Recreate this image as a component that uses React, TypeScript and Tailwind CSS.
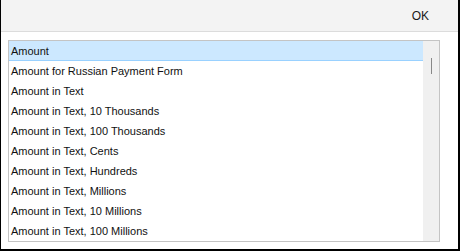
const items = [
  'Amount',
  'Amount for Russian Payment Form',
  'Amount in Text',
  'Amount in Text, 10 Thousands',
  'Amount in Text, 100 Thousands',
  'Amount in Text, Cents',
  'Amount in Text, Hundreds',
  'Amount in Text, Millions',
  'Amount in Text, 10 Millions',
  'Amount in Text, 100 Millions',
];

export default function App() {
  return (
    <div
      className="w-[460px] h-[251px] bg-white border-l border-r-2 border-b-2 border-black flex flex-col overflow-hidden text-[#111]"
      style={{ fontFamily: 'Tahoma, "Liberation Sans", Arial, sans-serif' }}
    >
      {/* toolbar */}
      <div className="h-[32px] shrink-0 bg-[#f3f3f3] border-b border-[#dcdcdc] flex items-center justify-end pr-[29px]">
        <button className="text-[12px] text-[#1a1a1a] leading-none">OK</button>
      </div>

      {/* list */}
      <div className="flex-1 pl-[7px] pr-[18px] pt-[8px] pb-[7px]">
        <div className="h-full border border-[#c4c4c4] flex overflow-hidden">
          <ul className="flex-1">
            {items.map((item, i) => (
              <li
                key={item}
                className={
                  i === 0
                    ? 'h-[20px] pl-[2px] pt-[1px] flex items-center text-[11px] bg-[#cce8ff] border-b border-[#99d1ff]'
                    : 'h-[20px] pl-[2px] pt-[1px] flex items-center text-[11px]'
                }
              >
                {item}
              </li>
            ))}
          </ul>
          <div className="w-[16px] bg-[#f0f0f0] flex justify-center pt-[17px]">
            <div className="w-[1px] h-[16px] bg-[#888]" />
          </div>
        </div>
      </div>
    </div>
  );
}
